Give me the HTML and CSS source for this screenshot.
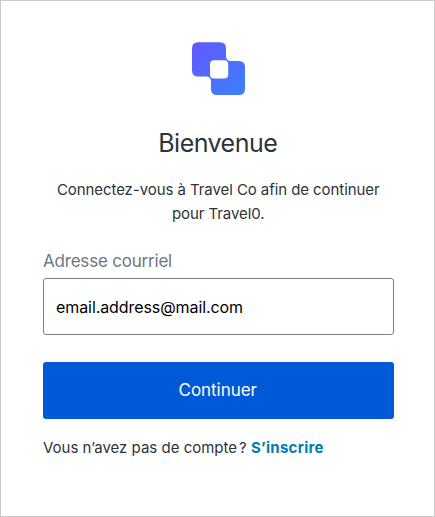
FILE: index.html
```html
<!DOCTYPE html>
<html lang="fr">
<head>
<meta charset="utf-8">
<title>Bienvenue</title>
<link rel="stylesheet" href="styles.css">
</head>
<body>
<main class="card">
  <svg class="logo" width="54" height="54" viewBox="0 0 54 54" aria-hidden="true">
    <defs>
      <linearGradient id="g" x1="0" y1="0" x2="1" y2="1">
        <stop offset="0" stop-color="#6359fc"/>
        <stop offset="1" stop-color="#3c80ff"/>
      </linearGradient>
    </defs>
    <path fill="url(#g)" d="M6 .2H28Q34 .2 34 6.2V14Q34 19 39 19H47Q53 19 53 25V47Q53 53 47 53H25Q19 53 19 47V39.5Q19 34.5 14 34.5H6Q0 34.5 0 28.5V6.2Q0 .2 6 .2Z"/>
    <rect x="18" y="18.2" width="18.2" height="18.2" rx="4" fill="#fff"/>
  </svg>
  <h1 class="title">Bienvenue</h1>
  <p class="intro"><span class="line first">Connectez-vous à Travel Co afin de continuer</span> <span class="line second">pour Travel0.</span></p>
  <form class="form">
    <label class="label" for="email"><span class="label-text">Adresse courriel</span></label>
    <input class="input" id="email" type="text" value="email.address@mail.com">
    <button class="button" type="button">Continuer</button>
  </form>
  <p class="signup"><span class="question">Vous n’avez pas de compte<span class="mark">?</span></span> <a class="link" href="#">S’inscrire</a></p>
</main>
</body>
</html>
```
FILE: styles.css
```css
* { box-sizing: border-box; }
body { margin: 0; background: #fff; font-family: Inter, sans-serif; color: #2d333a; }
.card { height: 517px; border: 1px solid #c9c9c9; padding: 41px 40.5px 0 42px; display: flex; flex-direction: column; }
.logo { display: block; margin-left: 149px; flex: none; }
.title { margin: 31px 1px 0 0; font-size: 25px; line-height: 32px; font-weight: 400; text-align: center; letter-spacing: -.53px; }
.intro { margin: 19px 0 0; font-size: 15px; line-height: 24px; text-align: center; letter-spacing: -.07px; }
.line { display: block; white-space: nowrap; }
.form { display: flex; flex-direction: column; margin-top: 23px; }
.label { font-size: 17px; line-height: 24px; color: #6f7780; letter-spacing: -.2px; }
.input { height: 57px; margin: 5px 0 0; padding: 0 12px; border: 1px solid #7d7f82; border-radius: 3px; font: 16px Inter, sans-serif; letter-spacing: -.08px; color: #000; background: #fff; }
.button { height: 57px; margin: 26.5px 0 0; padding: 0 1px 0 0; border: 0; border-radius: 3px; background: #0059d6; color: #fff; font: 17px Inter, sans-serif; letter-spacing: -.03px; }
.signup { margin: 17.5px 0 0; font-size: 15px; line-height: 24px; white-space: nowrap; }
.mark { margin-left: 2px; }
.link { color: #007cad; font-weight: 700; text-decoration: none; letter-spacing: .28px; }
```
